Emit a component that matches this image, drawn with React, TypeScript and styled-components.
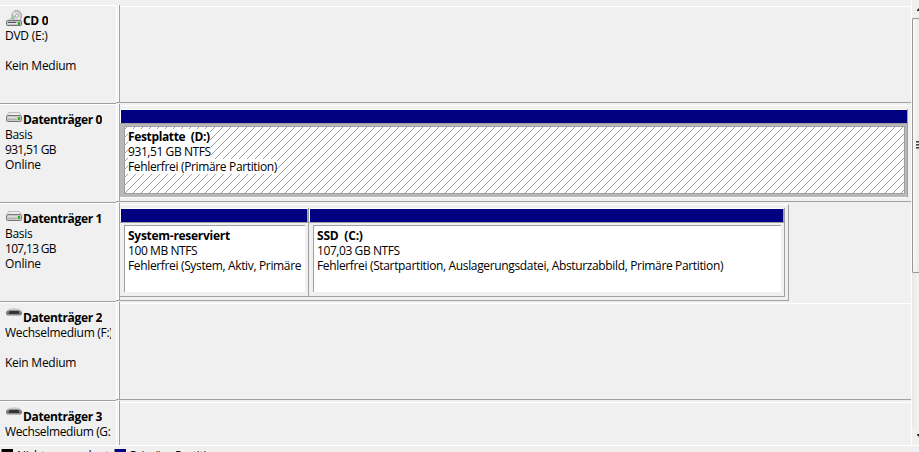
import styled, { createGlobalStyle } from 'styled-components';

const GlobalStyle = createGlobalStyle`
  * {
    box-sizing: border-box;
  }
  body {
    margin: 0;
    background: #f0f0f0;
    color: #000000;
    font: 12px/15px 'Open Sans', 'Noto Sans', sans-serif;
    overflow: hidden;
  }
`;

const Window = styled.div`
  width: 919px;
  height: 452px;
  display: flex;
  flex-direction: column;
  overflow: hidden;
`;

const Main = styled.div`
  display: flex;
  height: 446px;
  flex-shrink: 0;
  border-bottom: 1px solid #ffffff;
`;

const DiskList = styled.div`
  width: 912px;
  padding-top: 5px;
  border-right: 1px solid #ffffff;
  overflow: hidden;
`;

const DiskRow = styled.div`
  display: flex;
  height: 99px;
`;

const DiskInfo = styled.div`
  width: 116px;
  padding: 4px 5px 0;
  border: solid #ffffff;
  border-width: 1px 0;
  border-bottom-color: #a0a0a0;
`;

const DiskTitle = styled.div`
  display: flex;
  height: 18px;
  padding-left: 1px;

  svg {
    flex-shrink: 0;
    margin-right: 1px;
  }
`;

const DiskName = styled.div`
  padding-top: 3px;
`;

const Divider = styled.div`
  width: 4px;
  height: 98px;
  border: solid #a0a0a0;
  border-width: 0 1px 1px 0;
  background: linear-gradient(90deg, #ffffff 1px, #f0f0f0 1px 2px, #ffffff 2px);
`;

const Line = styled.div<{ $bold?: boolean; $spacing?: number }>`
  height: 15px;
  line-height: 15px;
  white-space: pre;
  overflow: hidden;
  font-weight: ${p => (p.$bold ? 700 : 400)};
  letter-spacing: ${p => p.$spacing ?? -0.35}px;
`;

const Volumes = styled.div<{ $width?: number }>`
  display: flex;
  align-items: flex-start;
  width: ${p => p.$width ?? 791}px;
  margin: 1px 0;
  padding-top: 3px;
  border: solid #ffffff;
  border-width: 1px 0;
  border-bottom-color: #a0a0a0;
  ${p => p.$width && 'border-right: 1px solid #a0a0a0;'}
`;

const VolumeBox = styled.div<{ $width: number; $selected?: boolean }>`
  width: ${p => p.$width}px;
  height: 89px;
  border: solid #a0a0a0;
  border-width: 0 1px 1px 0;
  border-bottom-color: ${p => (p.$selected ? '#ffffff' : '#a0a0a0')};
  background: ${p => (p.$selected ? '#b8b8b8' : '#f0f0f0')};
`;

const Stripe = styled.div<{ $selected?: boolean }>`
  height: 15px;
  background: #000080;
  border-top: 1px solid #ffffff;
  border-bottom: 1px solid #a0a0a0;
  box-shadow: inset 1px 0 #ffffff, inset ${p => (p.$selected ? 0 : -1)}px 0 #a0a0a0;
`;

const VolumeBody = styled.div<{ $selected?: boolean }>`
  position: relative;
  height: ${p => (p.$selected ? 68 : 67)}px;
  margin: 2px ${p => (p.$selected ? 2 : 3)}px 0 4px;
  padding: 2px 3px 0;
  border: solid #a0a0a0;
  border-width: ${p => (p.$selected ? '1px' : '1px 0 0 1px')};
  background: #ffffff;
`;

const VolumeText = styled.div<{ $selected?: boolean }>`
  position: relative;

  ${Line} {
    width: ${p => (p.$selected ? 'fit-content' : 'auto')};
    background: #ffffff;
  }
`;

const HatchFill = styled.svg`
  position: absolute;
  top: 0;
  left: 0;
  width: 100%;
  height: 100%;
`;

const ScrollBar = styled.div`
  width: 7px;
  height: 445px;
  display: flex;
  flex-direction: column;
  overflow: hidden;
  background: linear-gradient(90deg, #e6e6e6, #f0f0f0 4px);
`;

const ScrollArrow = styled.div`
  display: flex;
  align-items: center;
  height: 18px;
  padding-left: 5px;
  background: #f0f0f0;

  svg {
    flex-shrink: 0;
  }
`;

const Track = styled.div`
  flex: 1;
`;

const Thumb = styled.div`
  display: flex;
  flex-direction: column;
  justify-content: center;
  gap: 1px;
  height: 255px;
  padding: 0 0 2px 3px;
  border: 1px solid #979797;
  border-right: 0;
  border-radius: 2px 0 0 2px;
  background: linear-gradient(90deg, #fafafa, #e9e9e9);
`;

const Grip = styled.div`
  height: 2px;
  background: linear-gradient(#444444 1px, #8c8c8c 1px);
`;

const Legend = styled.div`
  display: flex;
  height: 6px;
  padding-left: 1px;
  overflow: hidden;
`;

const LegendItem = styled.div<{ $width: number }>`
  display: flex;
  width: ${p => p.$width}px;
  padding-top: 2px;
`;

const Swatch = styled.div<{ $color: string }>`
  width: 12px;
  height: 12px;
  margin: 1px 4px 0 0;
  border-left: 1px solid #808080;
  background: ${p => p.$color};
`;

const DriveIcon = () => (
  <svg width="16" height="18" viewBox="0 0 16 18">
    <path d="M2.5 3.5h11l1.500 4H1z" fill="#ededed" stroke="#bdbdbd" />
    <rect x=".5" y="6.5" width="15" height="6" rx="1.2" fill="#c9c9cb" stroke="#77777a" />
    <path d="M2 8.500h9" stroke="#dedede" />
    <path d="M2 10.500h9" stroke="#b2b2b4" />
    <rect x="12" y="8" width="2" height="3" fill="#28b414" />
  </svg>
);

const DiscIcon = () => (
  <svg width="16" height="18" viewBox="0 0 16 18">
    <path d="M1.500 11.5 4 8.5h9l2 3z" fill="#e0e0e0" stroke="#aaaaaa" strokeWidth=".8" />
    <ellipse cx="10.7" cy="5.8" rx="4.8" ry="5.3" fill="#d3d3d7" stroke="#909090" strokeWidth=".9" />
    <path d="m10.7 5.8-3.8-2 1-1.8zM10.7 5.8l3.5 2.8-1.5 1.5z" fill="#f8f8f8" />
    <path d="m10.7 5.8-4.2 1 .5 1.8z" fill="#78d374" />
    <path d="m10.7 5.8 2.3-4 1.4 2z" fill="#cfb9dc" />
    <circle cx="10.7" cy="5.8" r="1.4" fill="#ffffff" stroke="#999999" strokeWidth=".7" />
    <rect x=".5" y="10.5" width="15" height="5" rx="1" fill="#c4c4c6" stroke="#707070" />
    <path d="M2 12.5h8" stroke="#505050" />
    <path d="M2 13.5h9" stroke="#e5e5e5" />
    <rect x="12" y="12" width="2" height="3" fill="#28b414" />
  </svg>
);

const RemovableIcon = () => (
  <svg width="16" height="18" viewBox="0 0 16 18">
    <path d="M.5 5C1 2.200 4 1.200 8 1.200S15 2.200 15.500 5z" fill="#cccccc" />
    <path d="M0 5.500C.4 3.800 2 3.200 8 3.200s7.600.6 8 2.300c.2 2-.8 3-2.500 3h-11C.8 8.500-.2 7.500 0 5.500z" fill="#808080" />
    <path d="M3.500 4h9l1 3h-11z" fill="#333333" />
    <path d="M2 7.500h12" stroke="#8f8f8f" />
  </svg>
);

const Hatch = () => (
  <HatchFill shapeRendering="crispEdges">
    <defs>
      <pattern id="hatch" width="8" height="8" patternUnits="userSpaceOnUse">
        {[0, 1, 2, 3, 4, 5, 6, 7].map(i => (
          <rect key={i} x={(9 - i) % 8} y={i} width="1" height="1" fill="#a0a0a0" />
        ))}
      </pattern>
    </defs>
    <rect width="100%" height="100%" fill="url(#hatch)" />
  </HatchFill>
);

type VolumeProps = {
  width: number;
  name: string;
  nameSpacing: number;
  size: string;
  status: string;
  selected?: boolean;
};

const Volume = ({ width, name, nameSpacing, size, status, selected }: VolumeProps) => (
  <VolumeBox $width={width} $selected={selected}>
    <Stripe $selected={selected} />
    <VolumeBody $selected={selected}>
      {selected && <Hatch />}
      <VolumeText $selected={selected}>
        <Line $bold $spacing={nameSpacing}>{name}</Line>
        <Line $spacing={-0.42}>{size}</Line>
        <Line>{status}</Line>
      </VolumeText>
    </VolumeBody>
  </VolumeBox>
);

type DiskProps = {
  icon: React.ReactNode;
  name: string;
  lines: [string, number][];
  width?: number;
  children?: React.ReactNode;
};

const Disk = ({ icon, name, lines, width, children }: DiskProps) => (
  <DiskRow>
    <DiskInfo>
      <DiskTitle>
        {icon}
        <DiskName>
          <Line $bold $spacing={-0.34}>{name}</Line>
        </DiskName>
      </DiskTitle>
      {lines.map(([text, spacing], i) => (
        <Line key={i} $spacing={spacing}>{text || ' '}</Line>
      ))}
    </DiskInfo>
    <Divider />
    <Volumes $width={width}>{children}</Volumes>
  </DiskRow>
);

export default function App() {
  return (
    <Window>
      <GlobalStyle />
      <Main>
        <DiskList>
          <Disk
            icon={<DiscIcon />}
            name="CD 0"
            lines={[['DVD (E:)', -0.25], ['', 0], ['Kein Medium', -0.25]]}
          />
          <Disk
            icon={<DriveIcon />}
            name="Datenträger 0"
            lines={[['Basis', -0.3], ['931,51 GB', -0.68], ['Online', -0.15]]}
          >
            <Volume
              width={788}
              name="Festplatte  (D:)"
              nameSpacing={-0.36}
              size="931,51 GB NTFS"
              status="Fehlerfrei (Primäre Partition)"
              selected
            />
          </Disk>
          <Disk
            icon={<DriveIcon />}
            name="Datenträger 1"
            lines={[['Basis', -0.3], ['107,13 GB', -0.68], ['Online', -0.15]]}
            width={669}
          >
            <Volume
              width={189}
              name="System-reserviert"
              nameSpacing={-0.28}
              size="100 MB NTFS"
              status="Fehlerfrei (System, Aktiv, Primäre Partition)"
            />
            <Volume
              width={476}
              name="SSD  (C:)"
              nameSpacing={-0.2}
              size="107,03 GB NTFS"
              status="Fehlerfrei (Startpartition, Auslagerungsdatei, Absturzabbild, Primäre Partition)"
            />
          </Disk>
          <Disk
            icon={<RemovableIcon />}
            name="Datenträger 2"
            lines={[['Wechselmedium (F:)', -0.28], ['', 0], ['Kein Medium', -0.25]]}
          />
          <Disk
            icon={<RemovableIcon />}
            name="Datenträger 3"
            lines={[['Wechselmedium (G:)', -0.36]]}
          />
        </DiskList>
        <ScrollBar>
          <ScrollArrow>
            <svg width="7" height="4" viewBox="0 0 7 4"><path d="M-1 4 3 0l4 4z" fill="#222222" /></svg>
          </ScrollArrow>
          <Thumb>
            <Grip />
            <Grip />
            <Grip />
          </Thumb>
          <Track />
          <ScrollArrow>
            <svg width="7" height="4" viewBox="0 0 7 4"><path d="M-1 0h8L3 4z" fill="#222222" /></svg>
          </ScrollArrow>
        </ScrollBar>
      </Main>
      <Legend>
        <LegendItem $width={113}>
          <Swatch $color="#000000" />
          <Line $spacing={-0.3}>Nicht zugeordnet</Line>
        </LegendItem>
        <LegendItem $width={120}>
          <Swatch $color="#000080" />
          <Line>Primäre Partition</Line>
        </LegendItem>
      </Legend>
    </Window>
  );
}
